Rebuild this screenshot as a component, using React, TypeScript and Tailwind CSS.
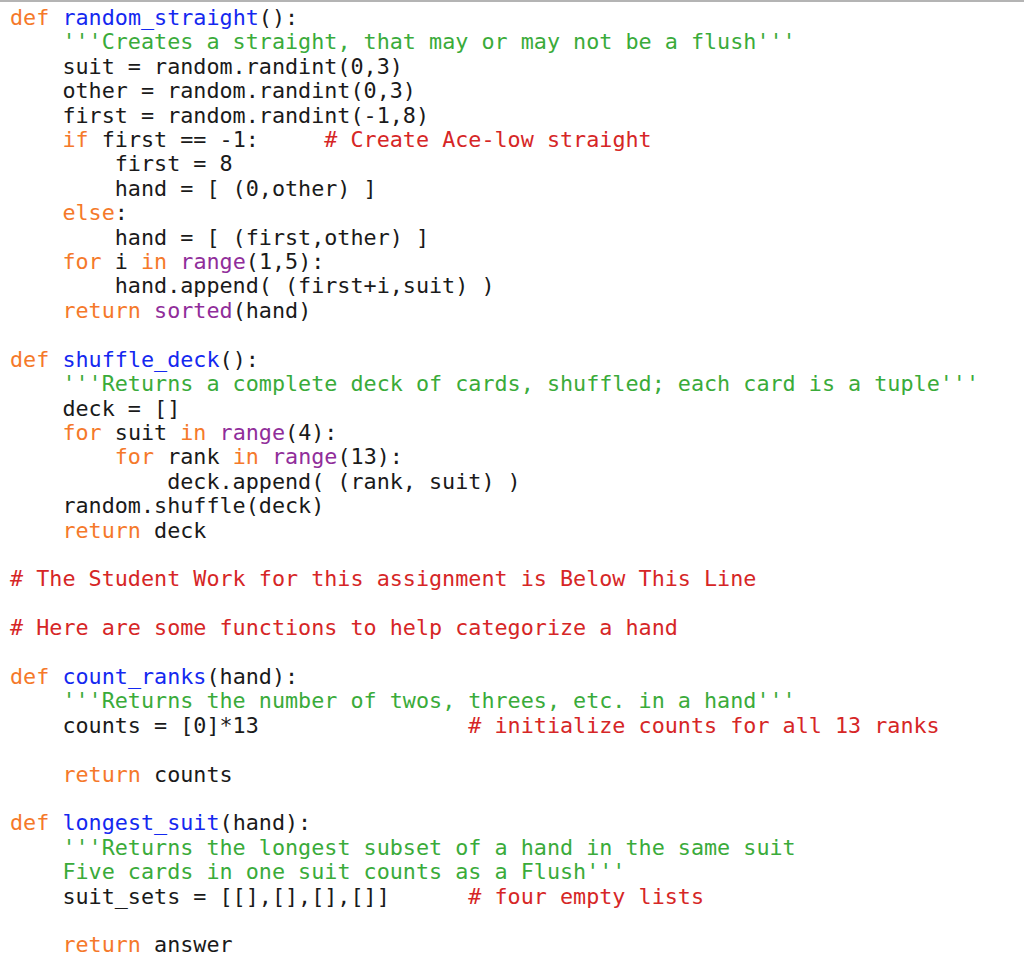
type Seg = [string, string?];

const K = "text-[#f5792a]"; // keyword
const D = "text-[#1428f0]"; // def name
const S = "text-[#3aab3a]"; // string
const C = "text-[#d62626]"; // comment
const B = "text-[#902d9a]"; // builtin

const lines: Seg[][] = [
  [["def", K], [" "], ["random_straight", D], ["():"]],
  [["    "], ["'''Creates a straight, that may or may not be a flush'''", S]],
  [["    suit = random.randint(0,3)"]],
  [["    other = random.randint(0,3)"]],
  [["    first = random.randint(-1,8)"]],
  [["    "], ["if", K], [" first == -1:     "], ["# Create Ace-low straight", C]],
  [["        first = 8"]],
  [["        hand = [ (0,other) ]"]],
  [["    "], ["else", K], [":"]],
  [["        hand = [ (first,other) ]"]],
  [["    "], ["for", K], [" i "], ["in", K], [" "], ["range", B], ["(1,5):"]],
  [["        hand.append( (first+i,suit) )"]],
  [["    "], ["return", K], [" "], ["sorted", B], ["(hand)"]],
  [],
  [["def", K], [" "], ["shuffle_deck", D], ["():"]],
  [["    "], ["'''Returns a complete deck of cards, shuffled; each card is a tuple'''", S]],
  [["    deck = []"]],
  [["    "], ["for", K], [" suit "], ["in", K], [" "], ["range", B], ["(4):"]],
  [["        "], ["for", K], [" rank "], ["in", K], [" "], ["range", B], ["(13):"]],
  [["            deck.append( (rank, suit) )"]],
  [["    random.shuffle(deck)"]],
  [["    "], ["return", K], [" deck"]],
  [],
  [["# The Student Work for this assignment is Below This Line", C]],
  [],
  [["# Here are some functions to help categorize a hand", C]],
  [],
  [["def", K], [" "], ["count_ranks", D], ["(hand):"]],
  [["    "], ["'''Returns the number of twos, threes, etc. in a hand'''", S]],
  [["    counts = [0]*13                "], ["# initialize counts for all 13 ranks", C]],
  [],
  [["    "], ["return", K], [" counts"]],
  [],
  [["def", K], [" "], ["longest_suit", D], ["(hand):"]],
  [["    "], ["'''Returns the longest subset of a hand in the same suit", S]],
  [["    "], ["Five cards in one suit counts as a Flush'''", S]],
  [["    suit_sets = [[],[],[],[]]      "], ["# four empty lists", C]],
  [],
  [["    "], ["return", K], [" answer"]],
];

export default function App() {
  return (
    <div className="w-[1024px] h-[968px] bg-white border-t-2 border-[#b4b4b4] overflow-hidden">
      <div className="pl-[10px] pt-[4px] font-['DejaVu_Sans_Mono',monospace] text-[21.75px] leading-[24.42px] text-[#1a1a1a]">
        {lines.map((line, i) => (
          <div key={i} className="whitespace-pre h-[24.42px]">
            {line.map(([t, c], j) => (
              <span key={j} className={c}>
                {t}
              </span>
            ))}
          </div>
        ))}
      </div>
    </div>
  );
}
